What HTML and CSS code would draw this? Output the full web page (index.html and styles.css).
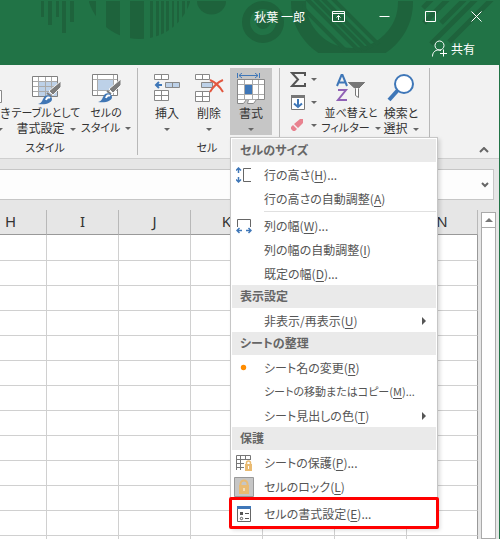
FILE: index.html
```html
<!DOCTYPE html>
<html lang="ja">
<head>
    <meta charset="UTF-8">
    <meta name="viewport" content="width=device-width, initial-scale=1.0">
    <title>Excel</title>
    <link rel="stylesheet" href="styles.css">
</head>
<body>
    <div class="window">
        <header class="titlebar">
            <svg class="pattern" width="500" height="65" viewBox="0 0 500 65" aria-hidden="true">
                <defs>
                    <clipPath id="discStripes">
                        <path d="M89 1h7v40h-7zM106 1h14v40h-14zM130 1h14v40h-14zM150 1h3v40h-3zM156 1h3v40h-3zM161 1h3v40h-3zM166 1h3v40h-3zM172 1h2v40h-2zM177 1h2v40h-2zM182 1h3v40h-3zM187 1h3v40h-3z"/>
                    </clipPath>
                    <clipPath id="arcBox"><path d="M285 1h140v52h-140z"/></clipPath>
                    <clipPath id="arcInner"><circle cx="352" cy="2" r="50"/></clipPath>
                    <clipPath id="barBox"><path d="M415 1h85v60h-85z"/></clipPath>
                </defs>
                <g fill="#1e633c">
                    <path d="M41 1h3v16h-3zM48 1h4v24h-4zM56 1h3v16h-3zM62 1h4v32h-4zM70 1h4v21h-4z"/>
                    <circle cx="139.500" cy="-14" r="53" clip-path="url(#discStripes)"/>
                    <path d="M197 1h29a14 13 0 0 1-29 0z"/>
                    <circle cx="263" cy="22" r="7"/>
                </g>
                <g fill="none" stroke="#1e633c">
                    <circle cx="263" cy="22" r="17" stroke-width="8"/>
                    <circle cx="352" cy="2" r="53.500" stroke-width="15" clip-path="url(#arcBox)"/>
                    <path d="M291-4l60 60M304-4l60 60M312-4l60 60M320-4l60 60M330-4l60 60" stroke-width="4" clip-path="url(#arcInner)"/>
                    <path d="M423 8l12-12M424 23l27-27M441 23l27-27M431 44l47-47M449 42l45-45" stroke-width="5" clip-path="url(#barBox)"/>
                </g>
            </svg>
            <div class="title-row">
                <span class="user">秋葉 一郎</span>
                <button class="caption" aria-label="リボンの表示オプション">
                    <svg width="13" height="11" viewBox="0 0 13 11"><path d="M.5.5h12v10H.5zM.5 2.500h12M6.500 9V4.500M4.500 6.500l2-2 2 2"/></svg>
                </button>
                <button class="caption" aria-label="最小化">
                    <svg width="11" height="11" viewBox="0 0 11 11"><path d="M.5 5.500h10"/></svg>
                </button>
                <button class="caption" aria-label="最大化">
                    <svg width="11" height="11" viewBox="0 0 11 11"><path d="M.5.5h10v10H.5z"/></svg>
                </button>
                <button class="caption" aria-label="閉じる">
                    <svg width="11" height="11" viewBox="0 0 11 11"><path d="M.5.5l10 10M10.500.5l-10 10"/></svg>
                </button>
            </div>
            <button class="share">
                <svg width="16" height="17" viewBox="0 0 16 17"><circle cx="7.500" cy="5.500" r="4.500"/><path d="M.5 16.500c0-4 2.500-6.500 6-6.500 1 0 2 .2 2.500.6M11.500 9.500v7M8 13.500h7"/></svg>
                共有
            </button>
        </header>

        <div class="workspace">
            <div class="ribbon">
                <div class="group styles">
                    <div class="tools">
                        <button class="tool cut">
                            <svg width="9" height="32" viewBox="0 0 9 32"><path d="M-4 17.500h5.500v12H-4" fill="#fff" stroke="#888"/></svg>
                            <span>き</span>
                            <span><i class="arrow"></i></span>
                        </button>
                        <button class="tool table-style">
                            <svg width="32" height="32" viewBox="0 0 32 32">
                                <path d="M2.500 3.500h25v20h-25z" fill="#fff"/>
                                <path d="M8 8h20v16H8z" fill="#bdd1e8"/>
                                <path d="M2 8.500h26M2 13.500h26M2 18.500h26M8.500 3v21M15.500 3v21M21.500 3v21" stroke="#aaa" fill="none"/>
                                <path d="M2.500 3.500h25v20h-25z" fill="none" stroke="#808080"/>
                                <path d="M31 8v6l-8 8-4-4z" fill="#7c7c7c" stroke="#f3f3f3"/>
                                <path d="M17 20l4 3" stroke="#7c7c7c" stroke-width="2"/>
                                <path d="M8 31c5-1 4-5 7-8 3-2 7 0 7 3 0 4-6 6-14 5z" fill="#4177b5"/>
                                <path d="M16 27c1-3 3-3 4-2" fill="none" stroke="#fff" stroke-width="2"/>
                            </svg>
                            <span class="kana">テーブルとして</span>
                            <span>書式設定<i class="arrow after"></i></span>
                        </button>
                        <button class="tool cell-style">
                            <svg width="32" height="32" viewBox="0 0 32 32">
                                <path d="M2.500 1.500h25v21h-25z" fill="#fff"/>
                                <path d="M8 7h15v10H8z" fill="#bdd1e8"/>
                                <path d="M2 6.500h26M2 17.500h26M7.500 1v22M23.500 1v22" stroke="#aaa" fill="none"/>
                                <path d="M2.500 1.500h25v21h-25z" fill="none" stroke="#808080"/>
                                <path d="M31 6v6l-8 8-4-4z" fill="#7c7c7c" stroke="#f3f3f3"/>
                                <path d="M17 18l4 3" stroke="#7c7c7c" stroke-width="2"/>
                                <path d="M8 29c5-1 4-5 7-8 3-2 7 0 7 3 0 4-6 6-14 5z" fill="#4177b5"/>
                                <path d="M16 25c1-3 3-3 4-2" fill="none" stroke="#fff" stroke-width="2"/>
                            </svg>
                            <span class="kana">セルの</span>
                            <span class="kana">スタイル<i class="arrow after"></i></span>
                        </button>
                    </div>
                    <div class="group-name kana">スタイル</div>
                </div>

                <div class="group cells">
                    <div class="tools">
                        <button class="tool">
                            <svg width="32" height="32" viewBox="0 0 32 32">
                                <g fill="#fff" stroke="#888"><path d="M3.500 1.500h14v5h-14zM10.500 1.500v5M3.500 17.500h14v10h-14zM3.500 22.500h14M10.500 17.500v10"/><path d="M14.500 9.500h14v5h-14zM21.500 9.500v5" fill="#bdd1e8"/></g>
                                <path d="M11 12H5M8 9l-3 3 3 3" fill="none" stroke="#3f77b8" stroke-width="2"/>
                            </svg>
                            <span>挿入</span>
                            <span><i class="arrow"></i></span>
                        </button>
                        <button class="tool">
                            <svg width="32" height="32" viewBox="0 0 32 32">
                                <g fill="#fff" stroke="#888"><path d="M2.500 1.500h14v5h-14zM9.500 1.500v5M2.500 18.500h14v10h-14zM2.500 23.500h14M9.500 18.500v10"/><path d="M8.500 9.500h11v5h-11z" fill="#bdd1e8"/></g>
                                <path d="M17 7c5 2 10 7 13 12M30 7c-5 2-10 7-13 12" fill="none" stroke="#e2573f" stroke-width="2"/>
                            </svg>
                            <span>削除</span>
                            <span><i class="arrow"></i></span>
                        </button>
                        <button class="tool open" aria-expanded="true">
                            <svg width="32" height="32" viewBox="0 0 32 32">
                                <path d="M2.500 0v5M24.500 0v5M4 2.500h19M7 0L4 2.500 7 5M20 0l3 2.500L20 5" fill="none" stroke="#3f77b8"/>
                                <path d="M2.500 6.500h27v20h-8l-3 4h-6l1-4h-2l-3 4h-6z" fill="#fff" stroke="#888"/>
                                <path d="M3 11.500h26M3 21.500h26M3 26.500h18M9.500 7v19M17.500 7v19M23.500 7v19" stroke="#aaa" fill="none"/>
                                <path d="M10 12h7v9h-7z" fill="#3f77b8"/>
                            </svg>
                            <span>書式</span>
                            <span><i class="arrow"></i></span>
                        </button>
                    </div>
                    <div class="group-name kana">セル</div>
                </div>

                <div class="group editing">
                    <div class="tools">
                        <div class="small-tools">
                            <button class="small-tool" aria-label="オート SUM">
                                <svg width="16" height="17" viewBox="0 0 16 17"><path d="M15 5V2H2l6 6.500L2 15h13v-3" fill="none" stroke="#555" stroke-width="2"/></svg>
                                <i class="arrow"></i>
                            </button>
                            <button class="small-tool" aria-label="フィル">
                                <svg width="16" height="17" viewBox="0 0 16 17"><path d="M1.500 1.500h13v14h-13z" fill="#fff" stroke="#777"/><path d="M1 1h14v3H1z" fill="#777"/><path d="M8 5v8M4 9.500L8 13l4-3.500" fill="none" stroke="#3f77b8" stroke-width="2"/></svg>
                                <i class="arrow"></i>
                            </button>
                            <button class="small-tool" aria-label="クリア">
                                <svg width="16" height="17" viewBox="0 0 16 17"><path d="M10 2h3v4l-5 5-4-4zM3 8l4 4-2 2H3l-2-2v-2z" fill="#e8828f"/></svg>
                                <i class="arrow"></i>
                            </button>
                        </div>
                        <button class="tool sort">
                            <svg width="32" height="32" viewBox="0 0 32 32">
                                <g fill="none" stroke-width="2"><path d="M2 13L6.500 2h1L12 13M3.500 9.500h7" stroke="#3f77b8"/><path d="M3 17h8L3 27h9" stroke="#9061b5"/></g>
                                <path d="M13.500 9.500h16l-6 6v9l-3-2v-7z" fill="#fff" stroke="#777"/><path d="M13 9h17l-6 6h-5z" fill="#777"/>
                            </svg>
                            <span class="kana">並べ替えと</span>
                            <span class="kana">フィルター<i class="arrow after"></i></span>
                        </button>
                        <button class="tool find">
                            <svg width="32" height="32" viewBox="0 0 32 32"><path d="M13 17L4 27" stroke="#3f77b8" stroke-width="4"/><circle cx="19" cy="11" r="9" fill="#fff" stroke="#3f77b8" stroke-width="2"/></svg>
                            <span>検索と</span>
                            <span>選択<i class="arrow after"></i></span>
                        </button>
                    </div>
                </div>
                <button class="collapse" aria-label="リボンを折りたたむ">
                    <svg width="10" height="6" viewBox="0 0 10 6"><path d="M1 5l4-4 4 4" fill="none" stroke="#666" stroke-width="2"/></svg>
                </button>
            </div>

            <div class="formula-bar">
                <input type="text" aria-label="数式バー">
                <button aria-label="数式バーの展開"><svg width="8" height="6" viewBox="0 0 8 6"><path d="M1 1l3 3 3-3" fill="none" stroke="#666" stroke-width="2"/></svg></button>
            </div>

            <div class="sheet">
                <div class="grid">
                    <table>
                        <thead>
                            <tr><th>H</th><th>I</th><th>J</th><th>K</th><th>L</th><th>M</th><th>N</th></tr>
                        </thead>
                        <tbody>
                            <tr><td></td><td></td><td></td><td></td><td></td><td></td><td></td></tr>
                            <tr><td></td><td></td><td></td><td></td><td></td><td></td><td></td></tr>
                            <tr><td></td><td></td><td></td><td></td><td></td><td></td><td></td></tr>
                            <tr><td></td><td></td><td></td><td></td><td></td><td></td><td></td></tr>
                            <tr><td></td><td></td><td></td><td></td><td></td><td></td><td></td></tr>
                            <tr><td></td><td></td><td></td><td></td><td></td><td></td><td></td></tr>
                            <tr><td></td><td></td><td></td><td></td><td></td><td></td><td></td></tr>
                            <tr><td></td><td></td><td></td><td></td><td></td><td></td><td></td></tr>
                            <tr><td></td><td></td><td></td><td></td><td></td><td></td><td></td></tr>
                            <tr><td></td><td></td><td></td><td></td><td></td><td></td><td></td></tr>
                            <tr><td></td><td></td><td></td><td></td><td></td><td></td><td></td></tr>
                            <tr><td></td><td></td><td></td><td></td><td></td><td></td><td></td></tr>
                            <tr><td></td><td></td><td></td><td></td><td></td><td></td><td></td></tr>
                        </tbody>
                    </table>
                </div>
                <div class="scrollbar">
                    <button aria-label="上へスクロール"><svg width="8" height="4" viewBox="0 0 8 4"><path d="M0 4l4-4 4 4z" fill="#777"/></svg></button>
                    <div class="track"></div>
                </div>
            </div>
        </div>

        <!-- 書式メニュー -->
        <div class="menu">
            <h2>セルのサイズ</h2>
            <button class="item">
                <svg width="16" height="16" viewBox="0 0 16 16"><path d="M15 1.500H7.500v13H15" fill="none" stroke="#666"/><path d="M2.500 1v5M2.500 10v5M0 3.500L2.500 1 5 3.500M0 12.500L2.500 15 5 12.500" fill="none" stroke="#3f77b8" stroke-width="1.500"/></svg>
                <span>行の高さ(<u>H</u>)...</span>
            </button>
            <button class="item"><span>行の高さの自動調整(<u>A</u>)</span></button>
            <hr>
            <button class="item">
                <svg width="16" height="16" viewBox="0 0 16 16"><path d="M1.500 9V1.500h13V9" fill="none" stroke="#666"/><path d="M1 12.500h5M10 12.500h5M3.500 10L1 12.500 3.500 15M12.500 10l2.500 2.500-2.500 2.500" fill="none" stroke="#3f77b8" stroke-width="1.500"/></svg>
                <span>列の幅(<u>W</u>)...</span>
            </button>
            <button class="item"><span>列の幅の自動調整(<u>I</u>)</span></button>
            <button class="item"><span>既定の幅(<u>D</u>)...</span></button>
            <h2>表示設定</h2>
            <button class="item submenu"><span>非表示/再表示(<u>U</u>)</span></button>
            <h2>シートの整理</h2>
            <button class="item">
                <svg width="16" height="16" viewBox="0 0 16 16"><circle cx="7.500" cy="7.500" r="2.700" fill="#ff8c00"/></svg>
                <span>シート名の変更(<u>R</u>)</span>
            </button>
            <button class="item"><span class="kana">シートの移動またはコピー(<u>M</u>)...</span></button>
            <button class="item submenu"><span>シート見出しの色(<u>T</u>)</span></button>
            <h2>保護</h2>
            <button class="item">
                <svg width="16" height="16" viewBox="0 0 16 16"><path d="M.5.5h14v12H.5zM0 4.500h15M0 8.500h15M4.500 0v15M9.500 0v13M.5 12v3" fill="#fff" stroke="#777"/><path d="M8 5h8v11H8z" fill="#fff"/><path d="M10.500 10V8a2 2 0 0 1 4 0v2" fill="none" stroke="#eabb72" stroke-width="1.500"/><path d="M9 9h7v7H9z" fill="#eabb72"/><path d="M12.500 11v3" stroke="#fff"/></svg>
                <span>シートの保護(<u>P</u>)...</span>
            </button>
            <button class="item checked">
                <svg width="20" height="20" viewBox="0 0 20 20"><path d="M.5.5h19v19H.5z" fill="#c6c6c6" stroke="#999"/><path d="M6.500 9V7a3.500 3.500 0 0 1 7 0v2" fill="none" stroke="#eabb72" stroke-width="2"/><path d="M5 8h10v9H5z" fill="#eabb72"/><path d="M10 11v3" stroke="#fff"/></svg>
                <span>セルのロック(<u>L</u>)</span>
            </button>
            <button class="item marked">
                <svg width="16" height="16" viewBox="0 0 16 16"><path d="M1.500.5h13v15h-13z" fill="#fff" stroke="#666"/><path d="M1 0h14v3H1z" fill="#3f77b8"/><path d="M4 6h3v3H4zM9 7h4v1H9zM9 12h4v1H9z" fill="#555"/><circle cx="5.500" cy="12.500" r="1.200" fill="none" stroke="#555"/></svg>
                <span>セルの書式設定(<u>E</u>)...</span>
            </button>
        </div>
    </div>
</body>
</html>
```

FILE: styles.css
```css
* {
    box-sizing: border-box;
}
body {
    margin: 0;
    font-family: "Noto Sans CJK JP", sans-serif;
    font-size: 12px;
    font-feature-settings: "palt";
    color: #333;
}
button {
    margin: 0;
    padding: 0;
    border: 0;
    background: none;
    font: inherit;
    font-feature-settings: inherit;
    color: inherit;
}
svg {
    display: block;
    flex: none;
}
.kana {
    font-size: 11px;
}
.window {
    position: relative;
    display: flex;
    flex-direction: column;
    height: 100vh;
    overflow: hidden;
}

/* title bar */
.titlebar {
    position: relative;
    display: flex;
    flex-direction: column;
    align-items: flex-end;
    flex: none;
    height: 65px;
    background-color: #217346;
    color: #fff;
}
.pattern {
    position: absolute;
    top: 0;
    left: 0;
}
.title-row, .share {
    position: relative;
    display: flex;
    align-items: center;
}
.title-row {
    height: 32px;
    padding-right: 1px;
}
.user {
    margin-right: 10px;
}
.caption {
    display: flex;
    align-items: center;
    justify-content: center;
    width: 46px;
    height: 32px;
}
.caption svg, .share svg {
    fill: none;
    stroke: #fff;
}
.share {
    gap: 3px;
    height: 34px;
    padding-right: 25px;
}

/* ribbon */
.workspace {
    display: flex;
    flex-direction: column;
    flex: 1;
    min-height: 0;
    border-right: 1px solid #217346;
    background-color: #e6e6e6;
}
.ribbon {
    display: flex;
    flex: none;
    height: 94px;
    padding-top: 3px;
    border-bottom: 1px solid #cfcfcf;
    background-color: #f2f2f2;
}
.group {
    display: flex;
    flex-direction: column;
    flex: none;
    height: 87px;
    border-right: 1px solid #b8b8b8;
}
.styles {
    width: 138px;
}
.cells {
    width: 142px;
    padding-left: 8px;
}
.editing {
    width: 150px;
    padding-left: 7px;
}
.tools {
    display: flex;
    height: 69px;
}
.tool {
    display: flex;
    flex-direction: column;
    align-items: center;
    flex: none;
    width: 42px;
    padding-top: 5px;
    line-height: 15px;
    white-space: nowrap;
}
.tool span {
    height: 15px;
}
.tool.cut {
    align-items: flex-start;
    width: 11px;
}
.tool.cut .arrow {
    margin-left: -3px;
}
.tool.table-style {
    width: 70px;
}
.tool.cell-style {
    width: 50px;
}
.tool.sort {
    width: 58px;
}
.tool.open {
    background-color: #c6c6c6;
}
.arrow {
    display: inline-block;
    border: 3px solid transparent;
    border-top-color: #666;
    border-bottom: 0;
    vertical-align: 2px;
}
.arrow.after {
    margin-left: 5px;
}
.small-tools {
    display: flex;
    flex-direction: column;
    width: 35px;
}
.small-tool {
    display: flex;
    align-items: center;
    gap: 5px;
    height: 23px;
    padding-left: 3px;
}
.group-name {
    padding-top: 3px;
    line-height: 18px;
    text-align: center;
}
.styles .group-name {
    width: 90px;
}
.cells .group-name {
    width: 122px;
}
.collapse {
    align-self: flex-end;
    margin-left: auto;
    padding: 0 10px 5px;
}

/* formula bar */
.formula-bar {
    display: flex;
    flex: none;
    height: 31px;
    margin: 10px 5px 0 0;
    border: 1px solid #c6c6c6;
    border-left: 0;
    background-color: #fdfdfd;
}
.formula-bar input {
    flex: 1;
    min-width: 0;
    border: 0;
    background: none;
}
.formula-bar button {
    padding: 0 4px;
}

/* sheet */
.sheet {
    display: flex;
    flex: 1;
    min-height: 0;
    padding-right: 3px;
}
.grid {
    display: flex;
    justify-content: flex-end;
    flex: 1;
    min-width: 0;
    padding-top: 10px;
    overflow: hidden;
}
table {
    flex: none;
    align-self: flex-start;
    width: 503px;
    table-layout: fixed;
    border-collapse: separate;
    border-spacing: 0;
}
th {
    height: 25px;
    padding: 0;
    border-right: 1px solid #b8b8b8;
    border-bottom: 1px solid #999;
    font-family: "Noto Sans", sans-serif;
    font-size: 15px;
    font-weight: normal;
    line-height: 22px;
    vertical-align: top;
}
th:last-child {
    width: 71px;
}
td {
    height: 25px;
    padding: 0;
    border-right: 1px solid #d0d0d0;
    border-bottom: 1px solid #d0d0d0;
    background-color: #fff;
}
tbody tr:first-child td {
    height: 26px;
}
td:last-child {
    border-right-color: #999;
}
.scrollbar {
    display: flex;
    flex-direction: column;
    flex: none;
    width: 15px;
    margin: 12px 0 0 3px;
}
.scrollbar button {
    display: flex;
    align-items: center;
    justify-content: center;
    height: 16px;
    border: 1px solid #aaa;
    background-color: #fff;
}
.track {
    flex: 1;
    border: 1px solid #aaa;
    border-top: 0;
    background-color: #fff;
}

/* drop-down menu */
.menu {
    position: absolute;
    top: 137px;
    left: 230px;
    width: 208px;
    padding: 1px;
    border: 1px solid #c6c6c6;
    background-color: #fff;
    box-shadow: 2px 2px 4px rgba(0,0,0,0.15);
    color: #555;
}
.menu h2 {
    height: 23px;
    margin: 0;
    padding-left: 8px;
    background-color: #eaeaea;
    font-size: 12px;
    line-height: 22px;
    color: #666;
}
.item {
    display: grid;
    grid-template-columns: 28px 1fr 14px;
    align-items: center;
    width: 100%;
    height: 24px;
    padding: 1px 0 0 4px;
    line-height: 23px;
    text-align: left;
    white-space: nowrap;
}
.item span {
    grid-column: 2;
}
.item u {
    text-underline-offset: 2px;
}
.item svg, .item span {
    grid-row: 1;
}
.checked {
    grid-template-columns: 30px 1fr 14px;
    padding-left: 2px;
}
.submenu::after {
    content: "";
    grid-row: 1;
    grid-column: 3;
    width: 4px;
    border: 4px solid transparent;
    border-left-color: #555;
    border-right: 0;
}
.menu hr {
    height: 1px;
    margin: 1px 0 1px 32px;
    border: 0;
    background-color: #e0e0e0;
}
.menu .marked {
    width: 210px;
    height: 32px;
    margin: -1px -3px -3px;
    padding-left: 4px;
    border: 3px solid #f00;
    border-radius: 2px;
    background-color: #fff;
}
```
